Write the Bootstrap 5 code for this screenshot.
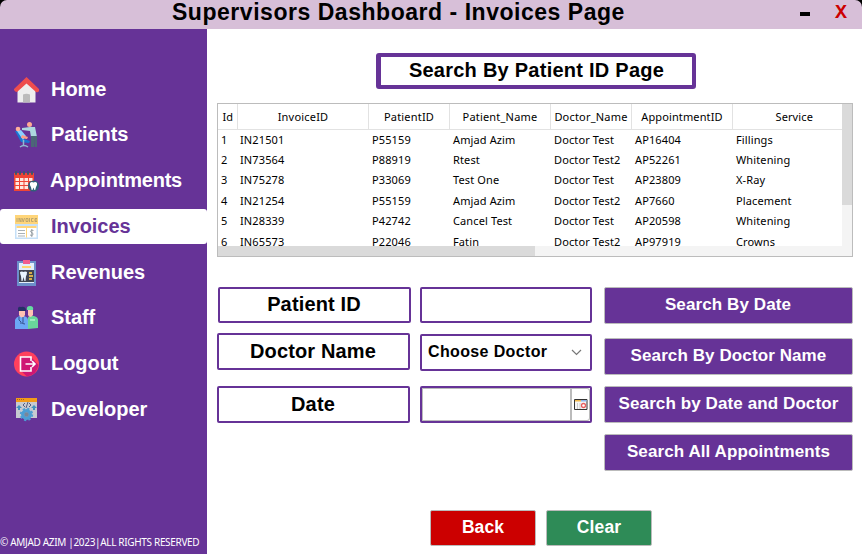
<!DOCTYPE html>
<html lang="en">
<head>
<meta charset="utf-8">
<title>Supervisors Dashboard - Invoices Page</title>
<meta name="viewport" content="width=device-width, initial-scale=1">
<link href="https://cdn.jsdelivr.net/npm/bootstrap@5.3.0/dist/css/bootstrap.min.css" rel="stylesheet">
<style>
:root{--brand:#663397}
body{font-family:"Liberation Sans",Arial,sans-serif;color:#000;background:#fff;overflow:hidden}
.app{width:862px;height:554px}
.titlebar-wrap{height:29px;background:#000}
.titlebar{height:29px;background:#d7bfd8;border-radius:7px 7px 0 0}
.titlebar h1{font-size:23px;line-height:24px;letter-spacing:.53px;margin-left:172px;flex:1}
.min-btn{width:10px;height:4px;background:#000;margin:12px 25px 0 0}
.close-btn{font:bold 20px/26px "Liberation Mono",monospace;color:#c00;width:12px;margin-right:15px}
.side{width:207px;background:var(--brand);padding-top:43px}
.side .nav{gap:10.75px}
.side .nav-link{height:35px;padding:0 0 0 14px;color:#fff;font-weight:700;font-size:20px;line-height:32px;letter-spacing:-.06px;gap:12px;border-radius:3px}
.side .nav-link span{padding-bottom:2px}
.side .nav-link .tight{letter-spacing:-.2px;margin-left:-1px}
.side .nav-link.active{background:#fff;color:var(--brand)}
.side svg{width:25px;height:26px;flex:none}
.copy{font:10px/14px "Noto Sans","Open Sans",sans-serif;color:#fff;white-space:nowrap;margin-bottom:5px;letter-spacing:-.33px}
.main{width:655px}
.page-head{width:320px;height:36px;margin:24px 0 0 169px;border:4px solid var(--brand);border-left-width:5px;border-radius:3px;font-weight:700;font-size:20px;line-height:27px;letter-spacing:.25px;text-align:center}
.grid-box{width:636px;height:154px;margin:14px 0 0 10px;border:1px solid #bcbcbc}
.grid-view{width:624px;height:142px}
.invoices{table-layout:fixed;width:637px;font:11px/16px "Noto Sans","Open Sans",sans-serif;letter-spacing:.12px;color:#000;white-space:nowrap}
.invoices th{height:25px;padding:1px 0 0 1px;font-weight:400;text-align:center;vertical-align:middle;border-right:1px solid #e2e2e2;border-bottom:1px solid #e2e2e2}
.invoices th:nth-child(-n+5):nth-child(n+2){letter-spacing:.2px}
.invoices th:last-child{border-right:0}
.invoices td{height:20.4px;padding:1px 0 0 4px;vertical-align:middle}
.invoices td:nth-child(-n+2){padding-left:3px}
.invoices .c1{width:19px}.invoices .c2{width:131px}.invoices .c3{width:81px}.invoices .c4{width:101px}.invoices .c7{width:123px}
.vbar{width:10px;background:#f4f4f4}.vbar div{height:101px;background:#dadada}
.hbar{height:10px;background:#f4f4f4}.hbar div{height:10px;width:317px;background:#dadada}
.form-area{margin:30px 0 0 10px}
.box{border:2px solid var(--brand);border-radius:2px;height:37px;background:#fff}
.tag{width:193px;font-weight:700;font-size:20px;line-height:33px;letter-spacing:.15px;text-align:center;padding-right:1px}
.tag.h36{line-height:31px;margin-left:1px}
.fields{margin:0 12px 0 9px}
.field{width:172px}
.doctor{font-weight:700;font-size:16px;letter-spacing:.36px;line-height:29px;padding:0 8px 0 6px}
.doctor span{padding-bottom:2px}
.h36{height:36px}
.gap-doc{margin-top:10px}.gap-date{margin-top:16px}
.fields .gap-doc{margin-top:11px}.fields .gap-date{margin-top:15px}
.act{border:1px solid #bbb;border-radius:2px;height:37px;background:var(--brand);color:#fff;font-weight:700;font-size:17px;line-height:31px;letter-spacing:.1px;padding:0 0 3px;text-align:center}
.wide{width:249px}
.first{padding-right:1px}
.wide+.wide{margin-top:11px}
.wide.first+.wide{margin-top:14px}
.date-in{border:1px solid #bbb;border-right-width:2px;flex:1}
.date-btn{width:18px;border:1px solid #bbb;border-left:0;border-radius:0 3px 3px 0}
.foot{margin:39px 0 0 223px;gap:10px}
.foot .act{width:106px;height:36px;font-size:17.5px;padding-bottom:2px}
.act.back{background:#c00}.act.clear-b{background:#2e8b57}
</style>
<script src="https://cdn.jsdelivr.net/npm/bootstrap@5.3.0/dist/js/bootstrap.bundle.min.js"></script>
</head>
<body>
<div class="app d-flex flex-column">
<header class="titlebar-wrap"><div class="titlebar d-flex">
<h1 class="fw-bold mb-0 text-nowrap">Supervisors Dashboard - Invoices Page</h1>
<div class="min-btn"></div><div class="close-btn">X</div>
</div></header>
<div class="d-flex flex-grow-1">
<aside class="side d-flex flex-column justify-content-between">
<nav class="nav flex-column flex-nowrap">
<a class="nav-link d-flex align-items-center" href="#"><svg viewBox="0 0 25 26"><path d="M3.500 11 12.500 3 21.500 11V25.500H3.500Z" fill="#eee"/><path d="M9 17.500q3.500-1.500 7 0v8H9Z" fill="#bbb"/><path d="M0 12 12.500 0 25 12v2q-1 2-3 1L12.500 6.500 3 15Q1 15 0 13Z" fill="#ee4d4d"/></svg><span>Home</span></a>
<a class="nav-link d-flex align-items-center" href="#"><svg viewBox="0 0 25 26"><path d="M1 9h3l6 8 6 2-1 2-8-1Z" fill="#1976d2"/><path d="M3 9 7 8l5 6-3 4Z" fill="#8ad0ff"/><path d="M8 13l6 2-1 2-6-1Z" fill="#ff9e88"/><circle cx="4" cy="7" r="2.300" fill="#ffb09a"/><path d="M16 5h5l2 10h-6l-1-6-8-1V6Z" fill="#add8df"/><circle cx="15.500" cy="2.500" r="2.500" fill="#ffab94"/><path d="M17 14h6v11h-2.500V16L20 25h-3Z" fill="#4b6777"/><path d="M9.500 18v5M6 25q4-3 8 0" stroke="#8ebbd0" stroke-width="1.500" fill="none"/></svg><span>Patients</span></a>
<a class="nav-link d-flex align-items-center" href="#"><svg viewBox="0 0 25 26"><path d="M0 5h20v18H0Z" fill="#ef4535"/><path d="M1 5h20" stroke="#3f566b" stroke-width="3.500" stroke-dasharray="2 2"/><path d="M1.500 10h3.500v3h-3.500Zm4.500 0h3.500v3h-3.500Zm4.500 0h3.500v3h-3.500Zm4.500 0h3.500v3h-3.500ZM1.500 14h3.500v3h-3.500Zm4.500 0h3.500v3h-3.500Zm4.500 0h3.500v3h-3.500ZM1.500 18h3.500v3h-3.500Zm4.500 0h3.500v3h-3.500Zm4.500 0h3.500v3h-3.500Z" fill="#ffe8df"/><circle cx="19.500" cy="18" r="5.500" fill="#31617a"/><path d="M16 15q1.500-1.500 3.500-.5 2-1 3.500.5.500 2-1 4l-.8 3h-.8l-.9-2.500-1 2.500h-.8l-.8-3q-1.400-2-.9-4Z" fill="#fff"/></svg><span class="tight">Appointments</span></a>
<a class="nav-link active d-flex align-items-center" href="#"><svg viewBox="0 0 25 26"><path d="M1 1h23v24H1Z" fill="#c5e0f8"/><path d="M1 1h23v9H1Z" fill="#ffd579"/><path d="M3 4v4M5 8V4l2 4V4M8 4l1.200 4L10.500 4M12 4.500h2v3h-2ZM15.500 4v4M19.500 4.500h-2v3h2M23 4.500h-2v3h2M21 6h2" stroke="#b7a06c" stroke-width=".9" fill="none"/><path d="M2.500 12h20v11.500h-20Z" fill="#fff"/><path d="M2.500 12h20v2h-20ZM12 14h1v9.500h-1Z" fill="#ffd579"/><path d="M4 16.500h7M4 19.500h7M4 22h7" stroke="#a8b1b7"/><path d="M19.500 16.500q-2.500-1-3 .7 0 1 1.500 1.500 1.500.6 1 2-.8 1.500-3 .3M17.800 15v8" stroke="#8d979d" fill="none" stroke-width=".9"/></svg><span>Invoices</span></a>
<a class="nav-link d-flex align-items-center" href="#"><svg viewBox="0 0 25 26"><path d="M3 1h19v25H3Z" fill="#6c8fca"/><path d="M5 3h15v20H5Z" fill="#e3eefb"/><path d="M9 0h7v4H9Z" fill="#f15d8e"/><path d="M8 6h9v2H8Z" fill="#ffd571"/><path d="M5 10h15v12H5Z" fill="#404451"/><path d="M6 12q2-1 3.500 0Q11 11 13 12q0 3-1 4l-.5 5h-1l-1-4-1 4h-1L7 16q-1-2-1-4Z" fill="#e8f4ff"/><path d="M15 12h3v2h-3Zm0 3h4v2h-4Zm0 3h3v2h-3Z" fill="#d6ae4c"/></svg><span>Revenues</span></a>
<a class="nav-link d-flex align-items-center" href="#"><svg viewBox="0 0 25 26"><path d="M1 24v-9q1-3 5-4h4q4 1 4 4v9Z" fill="#6ca8f6"/><path d="M14 24V13q0-2 3-2h3q4 1 4 4v8Z" fill="#69d69b"/><path d="M5 5h6v5q-3 5-6 0Z" fill="#ffc2b3"/><path d="M14 5h5v5q-3 4-5 0Z" fill="#ffc2b3"/><path d="M4 6V3q1-2 3-1 5-1 5 4Z" fill="#263066"/><path d="M13 5q-1-4 3-4 4 0 3 4Z" fill="#65dba0"/><path d="M5 12v3l2 2v2M9 12v5q-2 2 2 2" stroke="#36508c" fill="none"/><path d="M16 15h5" stroke="#d8fae6"/></svg><span>Staff</span></a>
<a class="nav-link d-flex align-items-center" href="#"><svg viewBox="0 0 25 26"><circle cx="12.500" cy="13" r="12.500" fill="#ff405d"/><path d="m18 7 6.500 7Q23 24 13 25.500L6 19Z" fill="#cf1774"/><path d="M7 6h10v14H7Z" fill="#cf1774"/><path d="M17 10V6H6.500v14H17v-4M11.500 13H21m-3-3 3 3-3 3" stroke="#fff" stroke-width="1.600" fill="none"/></svg><span>Logout</span></a>
<a class="nav-link d-flex align-items-center" href="#"><svg viewBox="0 0 25 26"><path d="M2 1h21v20H2Z" fill="#c7cad1"/><path d="M2 1h21v4H2Z" fill="#f39b18"/><path d="M3 2.500h7" stroke="#a46624" stroke-dasharray="1 1"/><path d="m5 8 3 3H6v2H4v-2H2Zm15 0 3 3h-2v2h-2v-2h-2Z" fill="#4093bf"/><path d="m11 6-2 2 2 2m4-4 2 2-2 2m-1-5-2 6" stroke="#555f83" fill="none"/><circle cx="12.500" cy="17.500" r="3.700" fill="none" stroke="#4c9ed4" stroke-width="3.500"/><circle cx="12.500" cy="17.500" r="5.800" fill="none" stroke="#4c9ed4" stroke-width="1.800" stroke-dasharray="2.280 2.280"/><circle cx="12.500" cy="17.500" r="2.200" fill="#77869a"/></svg><span>Developer</span></a>
</nav>
<div class="copy">© AMJAD AZIM |2023|ALL RIGHTS RESERVED</div>
</aside>
<main class="main">
<div class="page-head">Search By Patient ID Page</div>
<div class="grid-box d-flex flex-column">
<div class="d-flex">
<div class="grid-view overflow-hidden">
<table class="invoices">
<colgroup><col class="c1"><col class="c2"><col class="c3"><col class="c4"><col class="c3"><col class="c4"><col class="c7"></colgroup>
<thead><tr><th>Id</th><th>InvoiceID</th><th>PatientID</th><th>Patient_Name</th><th>Doctor_Name</th><th>AppointmentID</th><th>Service</th></tr></thead>
<tbody>
<tr><td>1</td><td>IN21501</td><td>P55159</td><td>Amjad Azim</td><td>Doctor Test</td><td>AP16404</td><td>Fillings</td></tr>
<tr><td>2</td><td>IN73564</td><td>P88919</td><td>Rtest</td><td>Doctor Test2</td><td>AP52261</td><td>Whitening</td></tr>
<tr><td>3</td><td>IN75278</td><td>P33069</td><td>Test One</td><td>Doctor Test</td><td>AP23809</td><td>X-Ray</td></tr>
<tr><td>4</td><td>IN21254</td><td>P55159</td><td>Amjad Azim</td><td>Doctor Test2</td><td>AP7660</td><td>Placement</td></tr>
<tr><td>5</td><td>IN28339</td><td>P42742</td><td>Cancel Test</td><td>Doctor Test</td><td>AP20598</td><td>Whitening</td></tr>
<tr><td>6</td><td>IN65573</td><td>P22046</td><td>Fatin</td><td>Doctor Test2</td><td>AP97919</td><td>Crowns</td></tr>
</tbody></table>
</div>
<div class="vbar"><div></div></div>
</div>
<div class="hbar"><div></div></div>
</div>
<div class="form-area d-flex align-items-start">
<div>
<div class="box tag h36">Patient ID</div>
<div class="box tag gap-doc">Doctor Name</div>
<div class="box tag gap-date">Date</div>
</div>
<div class="fields">
<div class="box field h36"></div>
<div class="box field doctor gap-doc d-flex justify-content-between align-items-center"><span>Choose Doctor</span><svg width="11" height="7" viewBox="0 0 11 7"><path d="m1 1 4.500 4.500L10 1" stroke="#777" stroke-width="1.200" fill="none"/></svg></div>
<div class="box field gap-date d-flex"><div class="date-in"></div><div class="date-btn d-flex align-items-center justify-content-center"><svg width="14" height="11" viewBox="0 0 14 11"><path d="M.5.500h12.500v10H.5Z" fill="#f6f6f6" stroke="#333"/><path d="M1 1h6v1.500H1Z" fill="#f1b84b"/><path d="M7 1h5.500v1.500H7Z" fill="#8bb4ea"/><path d="M3.500 4v6M6 4v6" stroke="#ccc"/><circle cx="9.500" cy="6.500" r="2" fill="#fff" stroke="#e86060" stroke-width="1.300"/></svg></div></div>
</div>
<div>
<button class="act wide first h36 d-block">Search By Date</button>
<button class="act wide d-block">Search By Doctor Name</button>
<button class="act wide d-block">Search by Date and Doctor</button>
<button class="act wide d-block">Search All Appointments</button>
</div>
</div>
<div class="foot d-flex"><button class="act back">Back</button><button class="act clear-b">Clear</button></div>
</main>
</div>
</div>
</body>
</html>
